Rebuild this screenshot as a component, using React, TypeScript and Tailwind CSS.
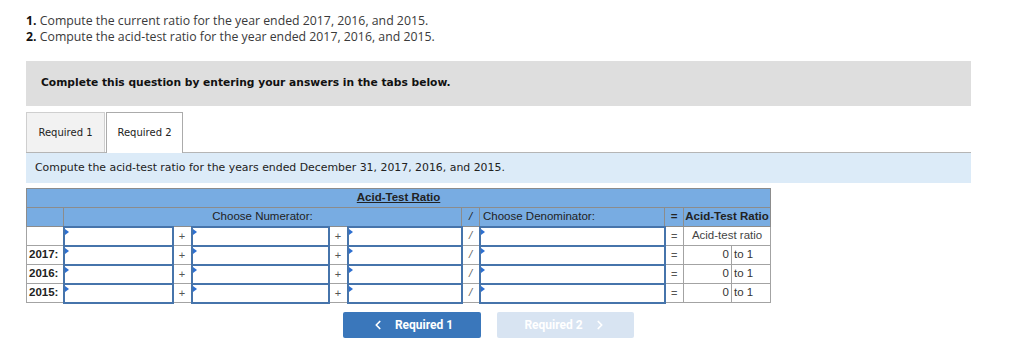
import { ChevronLeft, ChevronRight } from 'lucide-react';

const YEARS = ['', '2017:', '2016:', '2015:'];

function InputCell() {
  return (
    <td className="p-0 border-2 border-[#4674ab] bg-white h-[19px]">
      <div className="relative h-[15px]">
        <span className="absolute left-0 top-0 border-y-[3px] border-l-[4px] border-y-transparent border-l-[#2d6fd0]" />
      </div>
    </td>
  );
}

function OpCell({ op }: { op: string }) {
  return (
    <td className="border border-[#a3a3a3] text-center text-[11px] text-[#555] bg-white">{op}</td>
  );
}

export default function App() {
  return (
    <div className="w-[1024px] h-[361px] bg-white px-[26px] pt-[13px] overflow-hidden">
      <div className="font-['Open_Sans',sans-serif] text-[12.3px] leading-[16px] text-[#3a3a3a]">
        <p><b className="text-[#111]">1.</b> Compute the current ratio for the year ended 2017, 2016, and 2015.</p>
        <p><b className="text-[#111]">2.</b> Compute the acid-test ratio for the year ended 2017, 2016, and 2015.</p>
      </div>

      <div className="mt-[16px] w-[945px] h-[45px] bg-[#dedede] flex items-center pl-[15px] font-['DejaVu_Sans',Verdana,sans-serif] text-[10.7px] font-bold text-[#111]">
        Complete this question by entering your answers in the tabs below.
      </div>

      <div className="mt-[6px] flex items-start gap-px -mb-px font-['DejaVu_Sans',Verdana,sans-serif] text-[10px] text-[#222]">
        <div className="w-[79px] h-[40px] bg-[#f2f2f2] border border-b-0 border-[#cfcfcf] flex items-center justify-center">Required 1</div>
        <div className="relative w-[77px] h-[41px] bg-white border border-b-0 border-[#ababab] flex items-center justify-center pb-px">Required 2</div>
      </div>
      <div className="w-[945px] h-[31px] border-t border-[#b5b5b5] bg-[#dcebf8] flex items-center pl-[9px] font-['DejaVu_Sans',Verdana,sans-serif] text-[10.9px] text-[#222]">
        Compute the acid-test ratio for the years ended December 31, 2017, 2016, and 2015.
      </div>

      <table className="mt-[5px] table-fixed border-collapse w-[744px] font-['Liberation_Sans',Arial,sans-serif] text-[11.5px] text-[#222]">
        <colgroup>
          <col className="w-[37px]" />
          <col className="w-[109px]" />
          <col className="w-[19px]" />
          <col className="w-[137px]" />
          <col className="w-[19px]" />
          <col className="w-[114px]" />
          <col className="w-[18px]" />
          <col className="w-[185px]" />
          <col className="w-[19px]" />
          <col className="w-[48px]" />
          <col className="w-[39px]" />
        </colgroup>
        <tbody>
          <tr>
            <td colSpan={11} className="h-[19px] bg-[#78ace2] border border-[#8c8c8c] text-center font-bold underline">Acid-Test Ratio</td>
          </tr>
          <tr className="bg-[#78ace2]">
            <td className="h-[19px] border border-[#8c8c8c]" />
            <td colSpan={5} className="border border-[#8c8c8c] text-center">Choose Numerator:</td>
            <td className="border border-[#8c8c8c] text-center italic">/</td>
            <td className="border border-[#8c8c8c] pl-[3px]">Choose Denominator:</td>
            <td className="border border-[#8c8c8c] text-center font-bold">=</td>
            <td colSpan={2} className="border border-[#8c8c8c] text-center font-bold">Acid-Test Ratio</td>
          </tr>
          {YEARS.map((y, i) => (
            <tr key={i}>
              <td className="h-[19px] border border-[#a3a3a3] pl-[2px] font-bold bg-white">{y}</td>
              <InputCell />
              <OpCell op="+" />
              <InputCell />
              <OpCell op="+" />
              <InputCell />
              <td className="border border-[#a3a3a3] text-center italic text-[#666] bg-white">/</td>
              <InputCell />
              <OpCell op="=" />
              {i === 0 ? (
                <td colSpan={2} className="border border-[#a3a3a3] text-center text-[#444] bg-white">Acid-test ratio</td>
              ) : (
                <>
                  <td className="border border-[#a3a3a3] text-right pr-[2px] text-[#333] bg-white">0</td>
                  <td className="border border-[#a3a3a3] pl-[2px] text-[#333] bg-white">to 1</td>
                </>
              )}
            </tr>
          ))}
        </tbody>
      </table>

      <div className="mt-[8px] flex gap-[16px] pl-[317px] font-['Roboto',sans-serif] text-[12px] font-bold">
        <button className="w-[138px] h-[26px] rounded-[2px] bg-[#3a77bb] text-white flex items-center justify-center gap-[10px]">
          <ChevronLeft className="w-[14px] h-[14px]" strokeWidth={3} />
          Required 1
        </button>
        <button className="w-[137px] h-[26px] rounded-[2px] bg-[#d8e4f2] text-white flex items-center justify-center gap-[10px]">
          Required 2
          <ChevronRight className="w-[14px] h-[14px]" strokeWidth={3} />
        </button>
      </div>
    </div>
  );
}
